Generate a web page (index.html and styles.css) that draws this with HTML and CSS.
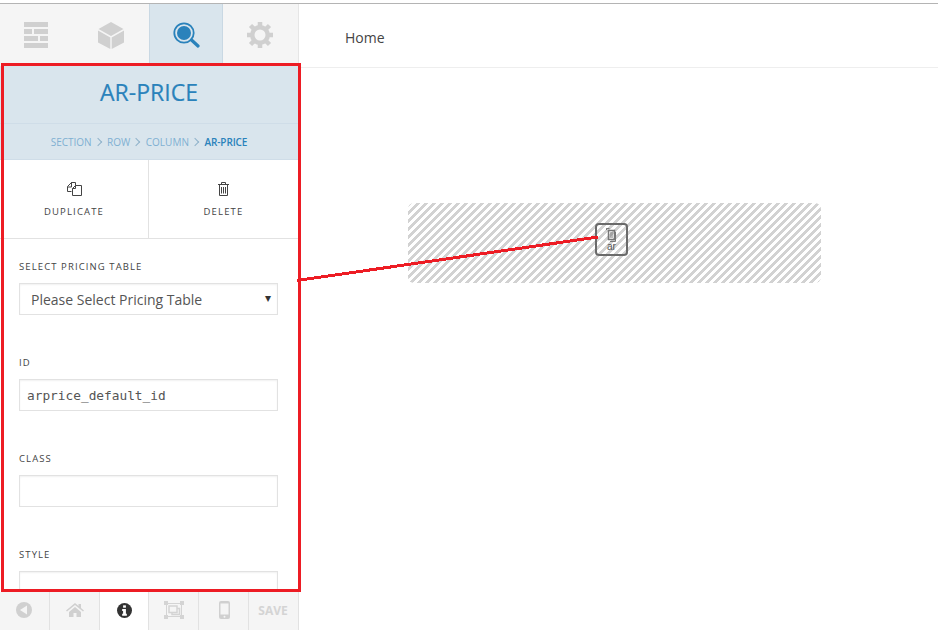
FILE: index.html
```html
<!DOCTYPE html>
<html lang="en">
<head>
  <meta charset="UTF-8">
  <meta name="viewport" content="width=device-width, initial-scale=1.0">
  <title>AR-Price Builder</title>
  <link rel="stylesheet" href="styles.css">
</head>
<body>
  <div class="app">
    <!-- Sidebar -->
    <div class="sidebar">
      <div class="tabs">
        <div class="tab">
          <svg width="24" height="26" viewBox="0 0 24 26" fill="#d0d0d0">
            <path d="M0 0h24v5H0zM0 7h8v5H0zM10 7h14v5H10zM0 14h14v5H0zM16 14h8v5h-8zM0 21h24v5H0z"/>
          </svg>
        </div>
        <div class="tab">
          <svg width="26" height="27" viewBox="0 0 26 27" fill="#d0d0d0">
            <path d="M13 0l12.500 7L13 14 .5 7zM0 8.500l12.300 7V27L0 20.500zM26 8.500v12L13.700 27V15.500z"/>
          </svg>
        </div>
        <div class="tab active">
          <svg width="27" height="26" viewBox="0 0 27 26">
            <circle cx="11" cy="11" r="9.700" fill="none" stroke="#2a82bb" stroke-width="1.800"/>
            <circle cx="11" cy="11" r="7" fill="#2a82bb"/>
            <path d="M18.500 18l6.500 6" stroke="#2a82bb" stroke-width="3.200" stroke-linecap="round"/>
          </svg>
        </div>
        <div class="tab last">
          <svg width="26" height="26" viewBox="0 0 26 26">
            <path d="M13 13V0M13 13v13M13 13H0M13 13h13M13 13L3.500 3.500M13 13l9.500 9.500M13 13l9.500-9.500M13 13l-9.500 9.500" stroke="#d0d0d0" stroke-width="4.500"/>
            <circle cx="13" cy="13" r="10" fill="#d0d0d0"/>
            <circle cx="13" cy="13" r="5.500" fill="#f5f5f5"/>
          </svg>
        </div>
      </div>

      <div class="panel">
        <div class="panel-head">
          <h1>AR-PRICE</h1>
          <div class="crumbs">
            <span>SECTION</span><i class="sep"></i><span>ROW</span><i class="sep"></i><span>COLUMN</span><i class="sep"></i><b>AR-PRICE</b>
          </div>
        </div>

        <div class="actions">
          <div class="action">
            <svg width="15" height="14" viewBox="0 0 15 14" fill="none" stroke="#444" stroke-width="1">
              <path d="M4.500 3.500V.5h4v3M4.500.5L.5 4.500v5h4M.5 5h4V.5"/>
              <path d="M8.500 3.500h6v10h-9V6.500zM8.500 3.500v3h-3"/>
            </svg>
            <span>DUPLICATE</span>
          </div>
          <div class="action">
            <svg width="11" height="14" viewBox="0 0 11 14" fill="none" stroke="#444" stroke-width="1">
              <path d="M0 2.500h11M1.500 2.500v11h8v-11M3.500 2.500V.5h4v2M3.500 5v6.500M5.500 5v6.500M7.500 5v6.500"/>
            </svg>
            <span>DELETE</span>
          </div>
        </div>

        <div class="form">
          <div class="field">
            <label for="pricingTable">SELECT PRICING TABLE</label>
            <div class="select" id="pricingTable">Please Select Pricing Table<i class="caret">&#9662;</i></div>
          </div>
          <div class="field">
            <label for="idInput">ID</label>
            <input class="mono" type="text" id="idInput" value="arprice_default_id">
          </div>
          <div class="field">
            <label for="classInput">CLASS</label>
            <input type="text" id="classInput">
          </div>
          <div class="field">
            <label for="styleInput">STYLE</label>
            <input type="text" id="styleInput">
          </div>
        </div>
      </div>

      <div class="footer">
        <div class="foot-btn back">
          <svg width="16" height="16" viewBox="0 0 16 16"><circle cx="8" cy="8" r="8" fill="#d0d0d0"/><path d="M11 3.500v9L4 8z" fill="#f5f5f5"/></svg>
        </div>
        <div class="foot-btn home">
          <svg width="18" height="14" viewBox="0 0 18 14" fill="#d0d0d0"><path d="M9 0L0 7.500l1 1L9 2l8 6.500 1-1-3-2.500V1h-2.500v2zM3 9l6-5 6 5v5h-4.500v-4h-3v4H3z"/></svg>
        </div>
        <div class="foot-btn current">
          <svg width="15" height="15" viewBox="0 0 16 16"><circle cx="8" cy="8" r="8" fill="#333"/><rect x="6.500" y="2.500" width="3" height="2.500" fill="#fff"/><path d="M5.500 6.500h4v5h1v2h-5v-2h1v-3h-1z" fill="#fff"/></svg>
        </div>
        <div class="foot-btn">
          <svg width="20" height="18" viewBox="0 0 20 18" fill="none" stroke="#d4d4d4">
            <path d="M2.500 2.500h15v13h-15z" stroke-width="1"/>
            <path d="M5 5h8v6.500H5zM8 11.500V13.500h7.500V7.500H13" stroke-width="1.500"/>
            <path d="M0 0h4v4H0zM16 0h4v4h-4zM0 14h4v4H0zM16 14h4v4h-4z" fill="#d4d4d4" stroke="none"/>
          </svg>
        </div>
        <div class="foot-btn">
          <svg width="11" height="18" viewBox="0 0 11 18"><rect width="11" height="18" rx="2" fill="#d0d0d0"/><rect x="1.500" y="2.500" width="8" height="11" fill="#f5f5f5"/><circle cx="5.500" cy="15.700" r="1" fill="#f5f5f5"/></svg>
        </div>
        <div class="foot-btn save">SAVE</div>
      </div>
    </div>

    <!-- Page canvas -->
    <div class="canvas">
      <div class="nav">Home</div>
      <div class="drop-area">
        <div class="element">
          <svg width="11" height="14" viewBox="0 0 11 14" fill="none" stroke="#777" stroke-width="1">
            <path d="M.5 2V.5h3M.5.5v1"/>
            <path d="M2.500 2.500h6v9h-6z" stroke-width="1.500"/>
            <path d="M9.500 4v9.500H4M4 5h3M4 7h3M4 9h3"/>
          </svg>
          <span>ar</span>
        </div>
      </div>
    </div>
  </div>

  <!-- Red annotation over the screenshot -->
  <div class="callout-box"></div>
  <svg class="callout-line" width="938" height="630">
    <path d="M297 280.500L598 237" stroke="#ed1c24" stroke-width="3" fill="none" shape-rendering="crispEdges"/>
  </svg>
</body>
</html>
```

FILE: styles.css
```css
* {
  box-sizing: border-box;
}
html, body {
  margin: 0;
  height: 630px;
  overflow: hidden;
}
body {
  font-family: 'Open Sans', sans-serif;
  background-color: #fff;
  color: #444;
  padding-top: 3px;
}
.app {
  display: flex;
  height: 627px;
  border-top: 1px solid #b4b4b4;
}
.sidebar {
  width: 299px;
  flex: none;
  display: flex;
  flex-direction: column;
}
.tabs {
  display: flex;
  height: 62px;
  flex: none;
  background: #f5f5f5;
}
.tab {
  width: 74.500px;
  padding-right: 2px;
  display: flex;
  align-items: center;
  justify-content: center;
}
.tab.active {
  width: 74px;
  padding-right: 0;
  background: #d9e5ed;
  border-left: 1px solid #c9d8e3;
  border-right: 1px solid #c9d8e3;
}
.tab.last {
  width: 76px;
  padding-right: 1px;
  border-right: 1px solid #e6e6e6;
}
.panel {
  flex: 1;
  width: 298px;
  overflow: hidden;
}
.panel-head {
  background: #d9e5ed;
  border-bottom: 1px solid #cfdde8;
}
h1 {
  margin: 0;
  height: 58px;
  line-height: 52px;
  text-align: center;
  font-size: 23px;
  font-weight: 400;
  color: #2a82bb;
  border-bottom: 1px solid #cfdde8;
  -webkit-text-stroke: 0.2px #2a82bb;
}
.crumbs {
  height: 35px;
  display: flex;
  align-items: center;
  justify-content: center;
  font-size: 10px;
  color: #7fb0d2;
}
.crumbs b {
  font-weight: 600;
  letter-spacing: -0.1px;
  color: #2a82bb;
}
.sep {
  width: 6px;
  height: 6px;
  margin: 0 6.500px 0 3px;
  border-top: 1px solid #8fb2ca;
  border-right: 1px solid #8fb2ca;
  transform: rotate(45deg);
}
.actions {
  display: flex;
  height: 79px;
  border-bottom: 1px solid #e2e2e2;
}
.action {
  flex: 1;
  display: flex;
  flex-direction: column;
  align-items: center;
  padding-top: 22px;
  font-size: 9.500px;
  letter-spacing: 1.15px;
  color: #444;
}
.action span {
  margin-top: 9px;
}
.action:first-child {
  flex: none;
  width: 149px;
  border-right: 1px solid #e2e2e2;
}
.form {
  padding: 21px 20px 0 19px;
}
.field {
  margin-bottom: 41px;
}
label {
  display: block;
  font-size: 9.500px;
  letter-spacing: 1.1px;
  color: #444;
  line-height: 14px;
  margin-bottom: 9px;
}
input, .select {
  display: block;
  width: 259px;
  height: 32px;
  padding: 0 7px;
  border: 1px solid #e2e2e2;
  box-shadow: inset 0 1px 2px rgba(0, 0, 0, 0.06);
  background: #fff;
  font-family: 'Open Sans', sans-serif;
  font-size: 14px;
  color: #555;
  outline: none;
}
.select {
  position: relative;
  padding-left: 11px;
  line-height: 32px;
}
.caret {
  position: absolute;
  right: 6px;
  top: -2px;
  font-style: normal;
  font-size: 12px;
  color: #333;
}
input.mono {
  font-family: 'DejaVu Sans Mono', monospace;
  font-size: 12.800px;
  color: #555;
}
.footer {
  display: flex;
  height: 38px;
  flex: none;
  padding-bottom: 2px;
  background: #f5f5f5;
}
.foot-btn {
  width: 50px;
  display: flex;
  align-items: center;
  justify-content: center;
  position: relative;
}
.foot-btn.back {
  padding-right: 2px;
}
.foot-btn.home {
  padding-right: 1px;
}
/* separators run the full height of the bar, under the padding too */
.foot-btn::after {
  content: "";
  position: absolute;
  right: 0;
  top: 0;
  bottom: -2px;
  border-right: 1px solid #e2e2e2;
}
.foot-btn.current {
  width: 49px;
}
.foot-btn.current::before {
  content: "";
  position: absolute;
  left: 0;
  right: 0;
  top: 0;
  bottom: -2px;
  background: #fff;
}
.foot-btn.current svg {
  position: relative;
}
.foot-btn.save {
  padding-right: 2px;
  font-size: 12px;
  font-weight: 700;
  color: #d4d4d4;
}
.canvas {
  flex: 1;
}
.nav {
  height: 64px;
  padding: 24px 0 0 46px;
  font-size: 14px;
  letter-spacing: 0.03px;
  line-height: 20px;
  color: #444;
  border-bottom: 1px solid #eee;
}
.drop-area {
  width: 413px;
  height: 80px;
  margin: 135px 0 0 109px;
  padding: 20px 0 0 187px;
  border-radius: 6px;
  background: repeating-linear-gradient(135deg, #d2d2d2 0, #d2d2d2 2.830px, #fff 2.830px, #fff 5.660px);
}
.element {
  width: 33px;
  height: 33px;
  display: flex;
  flex-direction: column;
  align-items: center;
  padding-top: 3px;
  border: 2px solid #6a6a6a;
  border-radius: 4px;
  font-family: 'Liberation Sans', sans-serif;
  font-size: 10px;
  line-height: 10px;
  color: #555;
}
.callout-box {
  position: absolute;
  left: 1px;
  top: 63px;
  width: 300px;
  height: 529px;
  border: 3px solid #ed1c24;
}
.callout-line {
  position: absolute;
  left: 0;
  top: 0;
}
```
